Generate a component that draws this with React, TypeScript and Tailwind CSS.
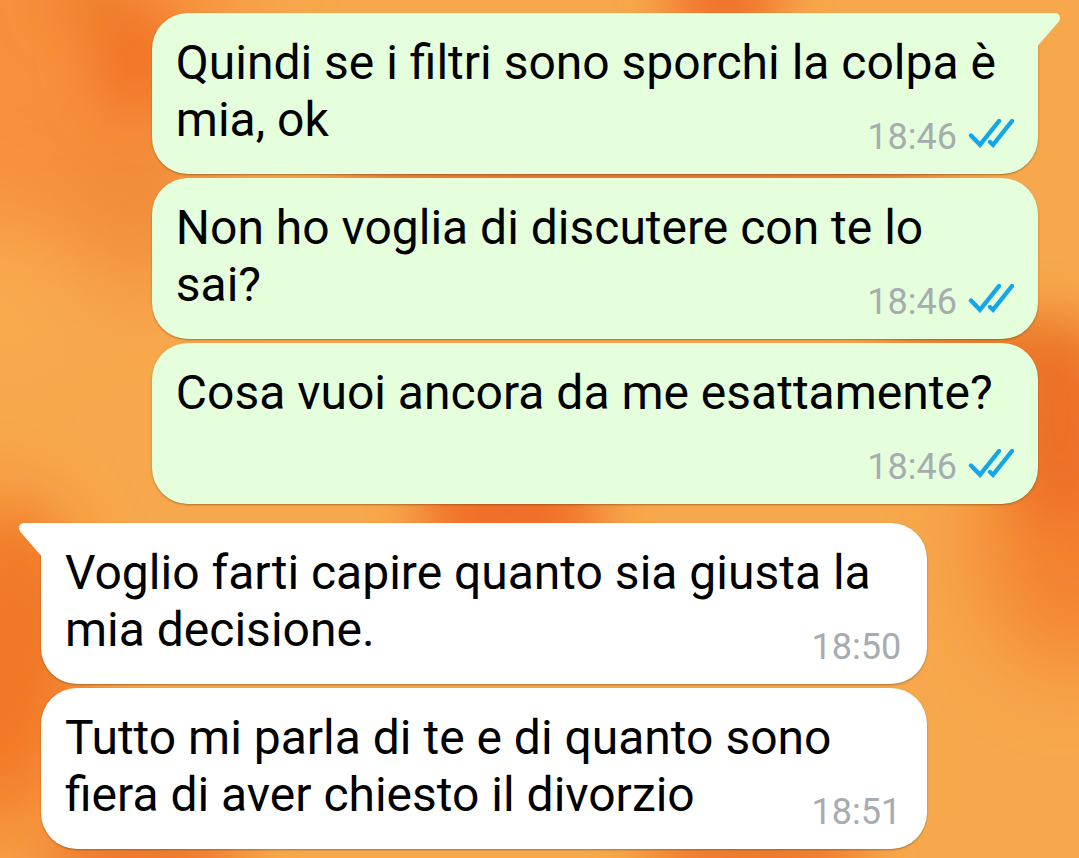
import { clsx } from 'clsx'

interface Message {
  id:    number
  text:  string
  time:  string
  mine:  boolean
  first: boolean
}

const messages: Message[] = [
  { id: 1, text: 'Quindi se i filtri sono sporchi la colpa è mia, ok', time: '18:46', mine: true, first: true },
  { id: 2, text: 'Non ho voglia di discutere con te lo sai?', time: '18:46', mine: true, first: false },
  { id: 3, text: 'Cosa vuoi ancora da me esattamente?', time: '18:46', mine: true, first: false },
  { id: 4, text: 'Voglio farti capire quanto sia giusta la mia decisione.', time: '18:50', mine: false, first: true },
  { id: 5, text: 'Tutto mi parla di te e di quanto sono fiera di aver chiesto il divorzio', time: '18:51', mine: false, first: false },
]

export default function App() {
  return (
    <main className="relative isolate min-h-screen overflow-hidden bg-[#f7a84c] px-[41px] pt-[13px] pb-2 font-[Roboto,sans-serif]">
      <Wallpaper />
      <ol className="flex flex-col gap-1">
        {messages.map((m) => <Bubble key={m.id} message={m} />)}
      </ol>
    </main>
  )
}

function Bubble({ message }: { message: Message }) {
  const { text, time, mine, first } = message
  return (
    <li
      className={clsx(
        'relative flow-root w-8/9 rounded-[36px] px-6 pt-[21px] pb-4 text-5xl leading-[57px] shadow-[0_1px_2px_rgba(90,50,10,0.45)]',
        mine ? 'self-end bg-[#e5fedb]' : 'self-start bg-white',
        first && (mine ? 'rounded-tr-none' : 'mt-[15px] rounded-tl-none'),
      )}
    >
      {first && <Tail mine={mine} />}
      <p className="inline text-black">{text}</p>
      {/* Sits beside the last line when there is room, otherwise below it */}
      <div className={clsx('float-right mt-[25px] flex gap-[11px]', !mine && 'mr-0.5')}>
        <time className="text-4xl leading-[42px] text-[#a6acb0]">{time}</time>
        {mine && <ReadChecks />}
      </div>
    </li>
  )
}

function Tail({ mine }: { mine: boolean }) {
  return (
    <svg
      viewBox="0 0 24 34"
      className={clsx('absolute top-0 h-[34px] w-6', mine ? '-right-[23px] text-[#e5fedb]' : '-left-[23px] -scale-x-100 text-white')}
      aria-hidden="true"
    >
      <path d="M0 0H18C22.5 0 24.5 5 21.5 9L1 32.5V34H0Z" fill="currentColor" />
    </svg>
  )
}

function ReadChecks() {
  return (
    <svg viewBox="0 0 46 30" className="mt-0.5 h-[30px] w-[46px]" fill="none" stroke="#14a6e8" strokeWidth="4.4" strokeLinecap="round" strokeLinejoin="miter" aria-hidden="true">
      <path d="M3 17.5 12 26.8 31 3" />
      <path d="M22 24 25 26.8 44 3" />
    </svg>
  )
}

// Soft orange blobs behind the conversation
function Wallpaper() {
  return (
    <svg viewBox="0 0 1079 858" preserveAspectRatio="none" className="absolute inset-0 -z-10 h-full w-full" aria-hidden="true">
      <defs>
        <filter id="soft" x="-50%" y="-50%" width="200%" height="200%">
          <feGaussianBlur stdDeviation="26" />
        </filter>
        <filter id="softer" x="-50%" y="-50%" width="200%" height="200%">
          <feGaussianBlur stdDeviation="45" />
        </filter>
      </defs>
      <g filter="url(#softer)">
        <ellipse cx="60" cy="70" rx="190" ry="170" fill="#f78f3c" />
        <ellipse cx="140" cy="200" rx="60" ry="90" fill="#f08a38" />
        <ellipse cx="0" cy="670" rx="75" ry="170" fill="#f27224" />
        <ellipse cx="1075" cy="540" rx="95" ry="130" fill="#f3812f" />
        <ellipse cx="10" cy="290" rx="40" ry="40" fill="#fdb051" />
      </g>
      <g filter="url(#soft)">
        <ellipse cx="135" cy="60" rx="45" ry="55" fill="#f27426" />
        <ellipse cx="90" cy="0" rx="40" ry="20" fill="#e87a28" />
        <ellipse cx="725" cy="0" rx="60" ry="40" fill="#f06c28" />
        <ellipse cx="640" cy="176" rx="310" ry="50" fill="#e87830" />
        <ellipse cx="20" cy="620" rx="35" ry="100" fill="#f07828" />
        <ellipse cx="145" cy="860" rx="105" ry="40" fill="#ee742a" />
        <ellipse cx="755" cy="860" rx="115" ry="40" fill="#ee742a" />
        <ellipse cx="510" cy="512" rx="95" ry="50" fill="#f06c28" />
        <ellipse cx="1060" cy="420" rx="60" ry="105" fill="#ee7028" />
        <ellipse cx="980" cy="345" rx="100" ry="30" fill="#e87628" />
      </g>
    </svg>
  )
}
